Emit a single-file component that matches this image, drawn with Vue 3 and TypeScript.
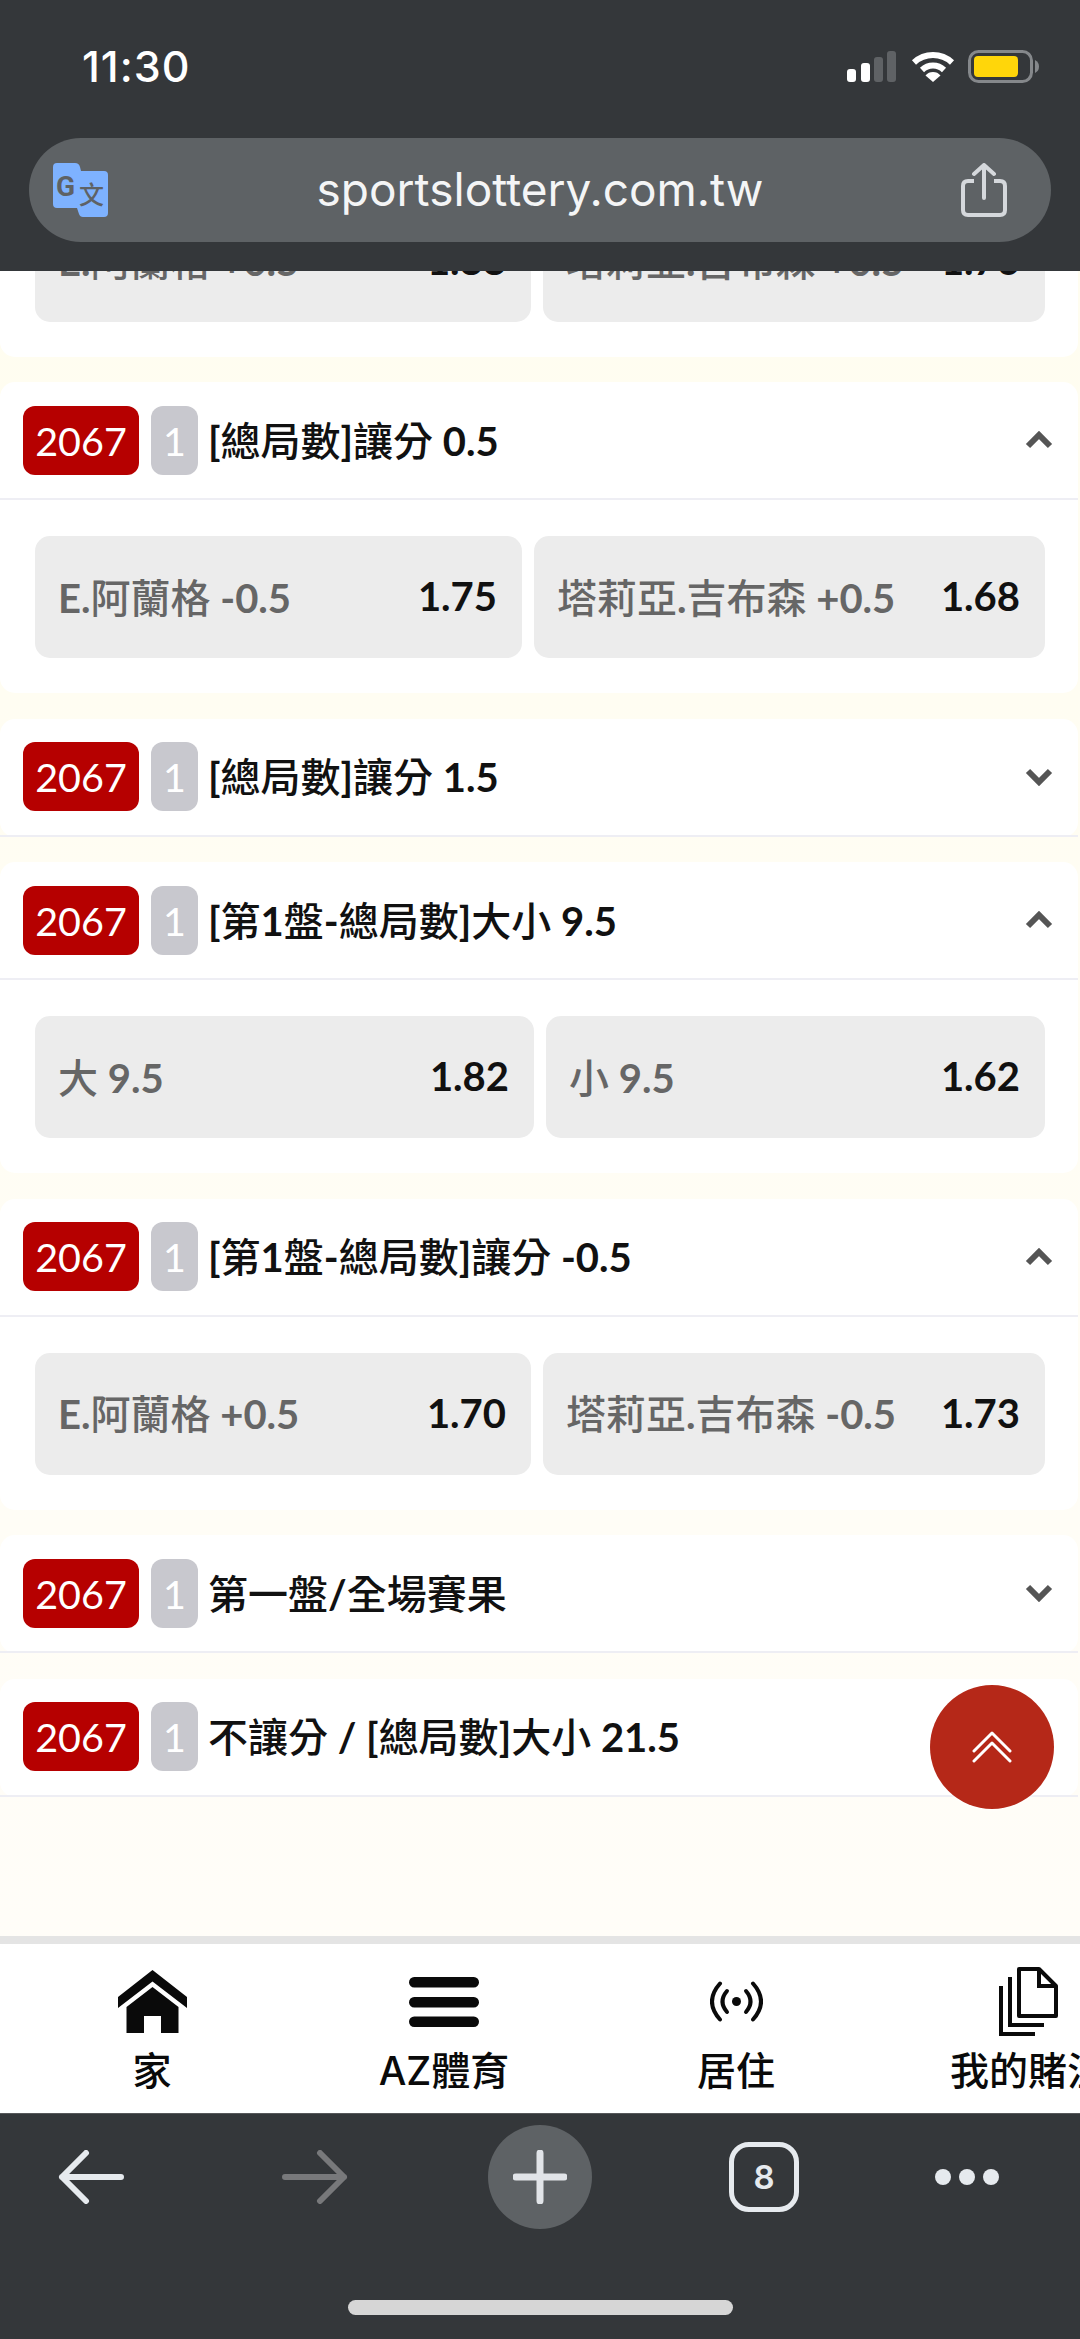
<script setup lang="ts">
interface Outcome {
  label: string
  odds: string
  width: number
}
interface Market {
  title: string
  open: boolean
  outcomes: Outcome[]
}
interface Run {
  text: string
  han: boolean
}

const markets: Market[] = [
  {
    title: '[總局數]讓分 -0.5',
    open: true,
    outcomes: [
      { label: 'E.阿蘭格 +0.5', odds: '1.88', width: 496 },
      { label: '塔莉亞.吉布森 +0.5', odds: '1.76', width: 502 },
    ],
  },
  {
    title: '[總局數]讓分 0.5',
    open: true,
    outcomes: [
      { label: 'E.阿蘭格 -0.5', odds: '1.75', width: 487 },
      { label: '塔莉亞.吉布森 +0.5', odds: '1.68', width: 511 },
    ],
  },
  { title: '[總局數]讓分 1.5', open: false, outcomes: [] },
  {
    title: '[第1盤-總局數]大小 9.5',
    open: true,
    outcomes: [
      { label: '大 9.5', odds: '1.82', width: 499 },
      { label: '小 9.5', odds: '1.62', width: 499 },
    ],
  },
  {
    title: '[第1盤-總局數]讓分 -0.5',
    open: true,
    outcomes: [
      { label: 'E.阿蘭格 +0.5', odds: '1.70', width: 496 },
      { label: '塔莉亞.吉布森 -0.5', odds: '1.73', width: 502 },
    ],
  },
  { title: '第一盤/全場賽果', open: false, outcomes: [] },
  { title: '不讓分 / [總局數]大小 21.5', open: false, outcomes: [] },
]

// Han text and Latin text take different weights, so each string is cut into runs.
function runs(text: string): Run[] {
  return (text.match(/[\u4e00-\u9fff]+|[^\u4e00-\u9fff]+/g) ?? []).map((part) => ({
    text: part,
    han: /[\u4e00-\u9fff]/.test(part),
  }))
}
</script>

<template>
  <div class="page">
    <header class="top">
      <div class="status">
        <span class="time">11:30</span>
        <div class="status-icons">
          <svg class="signal" width="49" height="31" viewBox="0 0 49 31">
            <rect x="0" y="18" width="9" height="13" rx="3" fill="#fff" />
            <rect x="14" y="12" width="9" height="19" rx="3" fill="#fff" />
            <rect x="27" y="6" width="9" height="25" rx="3" fill="#5f6265" />
            <rect x="40" y="0" width="9" height="31" rx="3" fill="#5f6265" />
          </svg>
          <svg class="wifi" width="44" height="32" viewBox="0 0 44 32">
            <path d="M3 12.5 A28 28 0 0 1 41 12.5" fill="none" stroke="#fff" stroke-width="6" />
            <path d="M11 20 A16 16 0 0 1 33 20" fill="none" stroke="#fff" stroke-width="6" />
            <path d="M14.5 25.5 A10 10 0 0 1 29.5 25.5 L22 32 Z" fill="#fff" />
          </svg>
          <svg class="battery" width="71" height="33" viewBox="0 0 71 33">
            <rect x="1.5" y="1.5" width="62" height="30" rx="9" fill="none" stroke="#85888b" stroke-width="3" />
            <rect x="6" y="6" width="44" height="21" rx="4" fill="#ffd60a" />
            <path d="M67 10 Q71 12 71 16.5 Q71 21 67 23 Z" fill="#85888b" />
          </svg>
        </div>
      </div>
      <div class="url-bar">
        <svg class="translate" width="55" height="54" viewBox="0 0 55 54">
          <path
            d="M4 0 H22 Q26 0 27 4 L28 8 H51 Q55 8 55 12 V50 Q55 54 51 54 H30 Q27 54 26 51 L24 45 H4 Q0 45 0 41 V4 Q0 0 4 0 Z"
            fill="#7eb2ff"
          />
          <text class="g-mark" x="3" y="33">G</text>
          <text class="wen-mark" x="26" y="41">文</text>
        </svg>
        <span class="url">sportslottery.com.tw</span>
        <svg class="share" width="46" height="54" viewBox="0 0 46 54">
          <path
            d="M13 18 H7 Q2 18 2 23 V47 Q2 52 7 52 H39 Q44 52 44 47 V23 Q44 18 39 18 H33"
            fill="none"
            stroke="#d5d8dc"
            stroke-width="4"
          />
          <path
            d="M23 35 V2 M13 11 L23 2 L33 11"
            fill="none"
            stroke="#d5d8dc"
            stroke-width="4"
            stroke-linecap="round"
            stroke-linejoin="round"
          />
        </svg>
      </div>
    </header>

    <main class="content">
      <div class="list">
        <section v-for="(m, i) in markets" :key="i" class="card">
          <div class="head">
            <span class="badge red">2067</span>
            <span class="badge grey">1</span>
            <span class="title">
              <span v-for="(r, k) in runs(m.title)" :key="k" :class="r.han ? 'han' : 'latin'">{{ r.text }}</span>
            </span>
            <svg class="chevron" :class="{ down: !m.open }" width="28" height="18" viewBox="0 0 28 18">
              <path d="M3 15 L14 4 L25 15" fill="none" stroke="#555" stroke-width="6" />
            </svg>
          </div>
          <div v-if="m.open" class="odds-row">
            <button
              v-for="o in m.outcomes"
              :key="o.label"
              class="odd"
              :style="{ flexBasis: o.width + 'px' }"
            >
              <span class="odd-label">
                <span v-for="(r, k) in runs(o.label)" :key="k" :class="r.han ? 'han' : 'latin'">{{ r.text }}</span>
              </span>
              <span class="odd-value">{{ o.odds }}</span>
            </button>
          </div>
        </section>
      </div>
    </main>

    <nav class="tabs">
      <div class="tab">
        <div class="tab-icon">
          <svg width="69" height="63" viewBox="0 0 69 63">
            <path d="M34.5 0 L69 27 V38 L34.5 11.5 L0 38 V27 Z" fill="#0a0a0a" />
            <path
              d="M34.5 17 L60.5 37 V63 H43 V46 H26 V63 H8.5 V37 Z"
              fill="#0a0a0a"
            />
          </svg>
        </div>
        <span>家</span>
      </div>
      <div class="tab">
        <div class="tab-icon">
          <svg width="70" height="50" viewBox="0 0 70 50">
            <rect x="0" y="0" width="70" height="10.5" rx="5.2" fill="#0a0a0a" />
            <rect x="0" y="20" width="70" height="10.5" rx="5.2" fill="#0a0a0a" />
            <rect x="0" y="39.5" width="70" height="10.5" rx="5.2" fill="#0a0a0a" />
          </svg>
        </div>
        <span>AZ體育</span>
      </div>
      <div class="tab">
        <div class="tab-icon">
          <svg width="53" height="41" viewBox="0 0 53 41">
            <circle cx="26.5" cy="20.5" r="4.5" fill="#0a0a0a" />
            <g fill="none" stroke="#0a0a0a" stroke-width="4" stroke-linecap="round">
              <path d="M17 10 Q8 20.5 17 31" />
              <path d="M36 10 Q45 20.5 36 31" />
              <path d="M10 2.5 Q-6 20.5 10 38.5" />
              <path d="M43 2.5 Q59 20.5 43 38.5" />
            </g>
          </svg>
        </div>
        <span>居住</span>
      </div>
      <div class="tab">
        <div class="tab-icon">
          <svg width="59" height="69" viewBox="0 0 59 69">
            <g fill="none" stroke="#0a0a0a" stroke-width="4">
              <path d="M20 2 H40 L57 19 V49 H20 Z" stroke-linejoin="round" />
              <path d="M40 2 V19 H57" />
              <path d="M11 10 V58 H45" />
              <path d="M2 19 V67 H36" />
            </g>
          </svg>
        </div>
        <span>我的賭注</span>
      </div>
    </nav>

    <footer class="toolbar">
      <div class="tools">
        <div class="tool">
          <svg width="66" height="54" viewBox="0 0 66 54">
            <path
              d="M63 27 H4 M28 3 L4 27 L28 51"
              fill="none"
              stroke="#e6eaee"
              stroke-width="6"
              stroke-linecap="round"
              stroke-linejoin="round"
            />
          </svg>
        </div>
        <div class="tool">
          <svg width="66" height="54" viewBox="0 0 66 54">
            <path
              d="M3 27 H62 M38 3 L62 27 L38 51"
              fill="none"
              stroke="#78797b"
              stroke-width="6"
              stroke-linecap="round"
              stroke-linejoin="round"
            />
          </svg>
        </div>
        <div class="tool">
          <div class="new-tab">
            <svg width="54" height="54" viewBox="0 0 54 54">
              <path
                d="M27 3 V51 M3 27 H51"
                fill="none"
                stroke="#e1e4e8"
                stroke-width="7"
                stroke-linecap="round"
              />
            </svg>
          </div>
        </div>
        <div class="tool">
          <div class="tab-count">8</div>
        </div>
        <div class="tool">
          <div class="dots"><i></i><i></i><i></i></div>
        </div>
      </div>
      <div class="home-bar"></div>
    </footer>

    <button class="to-top" aria-label="top">
      <svg width="40" height="32" viewBox="0 0 40 32">
        <path
          d="M2 20 L20 2 L38 20 M2 30 L20 12 L38 30"
          fill="none"
          stroke="#fff"
          stroke-width="3"
          stroke-linecap="round"
          stroke-linejoin="round"
        />
      </svg>
    </button>
  </div>
</template>

<style scoped>
.page {
  position: relative;
  display: flex;
  flex-direction: column;
  width: 1080px;
  height: 2339px;
  overflow: hidden;
  background: #fffdf3;
  font-family: Lato, 'Noto Sans CJK TC', sans-serif;
}

/* browser chrome, top */
.top {
  flex: none;
  position: relative;
  z-index: 2;
  height: 271px;
  background: #34373a;
  box-sizing: border-box;
  padding: 0 29px;
}
.status {
  height: 138px;
  display: flex;
  align-items: flex-start;
  justify-content: space-between;
  padding: 0 12px 0 53px;
}
.time {
  margin-top: 41px;
  color: #fff;
  font: 500 43px/50px Inter, sans-serif;
  letter-spacing: 1px;
}
.status-icons {
  display: flex;
  align-items: flex-start;
  margin-top: 50px;
}
.signal {
  margin-top: 1px;
  margin-right: 15px;
}
.wifi {
  margin-right: 13px;
}
.url-bar {
  height: 104px;
  border-radius: 52px;
  background: #5e6265;
  display: flex;
  align-items: center;
  justify-content: space-between;
  padding: 0 44px 0 24px;
}
.url {
  color: #f4f5f6;
  font: 400 46px/60px Inter, sans-serif;
  margin-left: 11px;
  padding-bottom: 2px;
}
.g-mark {
  font: 700 28px Roboto, sans-serif;
  fill: #5e6265;
}
.wen-mark {
  font: 500 25px 'Noto Sans CJK SC', sans-serif;
  fill: #5e6265;
}

/* market list */
.content {
  flex: 1;
  min-height: 0;
  overflow: hidden;
  background: linear-gradient(#fffdf0, #fffdf8);
}
.list {
  display: flex;
  flex-direction: column;
  gap: 25.5px;
  margin-top: -225.5px;
}
.card {
  width: 1078px;
  background: #fff;
  border-radius: 15px;
}
.head {
  height: 118px;
  box-sizing: border-box;
  display: flex;
  align-items: center;
  gap: 12px;
  padding: 0 25px 0 23px;
  border-bottom: 2px solid #eeeef4;
}
.badge {
  height: 69px;
  display: flex;
  align-items: center;
  justify-content: center;
  border-radius: 12px;
  color: #fff;
  font-size: 39.5px;
}
.red {
  width: 116px;
  background: #b60000;
}
.grey {
  width: 47px;
  background: #c8c8ce;
}
.title {
  flex: 1;
  margin-left: -2px;
  padding-bottom: 3px;
  font-size: 40px;
  color: #111;
}
.han {
  font-weight: 500;
}
.latin {
  font-weight: 700;
}
.chevron.down {
  transform: rotate(180deg);
}
.odds-row {
  display: flex;
  gap: 12px;
  padding: 36px 33px 35px 35px;
}
.odd {
  flex: 0 0 auto;
  height: 122px;
  box-sizing: border-box;
  display: flex;
  align-items: center;
  justify-content: space-between;
  padding: 0 25px 0 23px;
  border: 0;
  border-radius: 15px;
  background: #ececec;
  font-family: inherit;
  font-size: 40px;
}
.odd-label {
  padding-bottom: 3px;
  color: #666;
}
.odd-value {
  padding-bottom: 2px;
  color: #111;
  font-weight: 700;
}

/* bottom tab strip */
.tabs {
  flex: none;
  height: 169px;
  box-sizing: border-box;
  display: grid;
  grid-template-columns: repeat(4, 292px);
  padding-left: 6px;
  background: #fff;
  box-shadow: 0 -8px 0 #e4e4e4;
  position: relative;
}
.tab {
  display: flex;
  flex-direction: column;
  align-items: center;
  color: #0a0a0a;
  font: 500 39px/46px Inter, 'Noto Sans CJK TC', sans-serif;
  white-space: nowrap;
}
.tab-icon {
  height: 69px;
  margin-top: 23px;
  margin-bottom: 12px;
  display: flex;
  align-items: center;
  justify-content: center;
}

/* browser chrome, bottom */
.toolbar {
  flex: none;
  height: 226px;
  box-sizing: border-box;
  background: #34373a;
  border-top: 1px solid #56585a;
  display: flex;
  flex-direction: column;
  align-items: center;
}
.tools {
  width: 100%;
  display: grid;
  grid-template-columns: 182px 266px 184px 264px 142px;
  align-items: center;
  height: 104px;
  margin-top: 11px;
}
.tool {
  display: flex;
  align-items: center;
  justify-content: center;
}
.new-tab {
  width: 104px;
  height: 104px;
  border-radius: 50%;
  background: #5e6265;
  display: flex;
  align-items: center;
  justify-content: center;
}
.tab-count {
  width: 70px;
  height: 70px;
  box-sizing: border-box;
  border: 5px solid #e6eaee;
  border-radius: 20px;
  display: flex;
  align-items: center;
  justify-content: center;
  color: #e6eaee;
  font: 600 33px Inter, sans-serif;
}
.dots {
  display: flex;
  gap: 8px;
}
.dots i {
  width: 16px;
  height: 16px;
  border-radius: 50%;
  background: #e6eaee;
}
.home-bar {
  width: 385px;
  height: 15px;
  margin-top: 71px;
  border-radius: 8px;
  background: #d6d6d6;
}

/* scroll-to-top button floating over the list */
.to-top {
  position: absolute;
  left: 930px;
  top: 1685px;
  width: 124px;
  height: 124px;
  padding: 0;
  border: 0;
  border-radius: 50%;
  background: #b52818;
  display: flex;
  align-items: center;
  justify-content: center;
  box-shadow: 0 1px 3px rgba(255, 255, 255, 0.9);
}
</style>
